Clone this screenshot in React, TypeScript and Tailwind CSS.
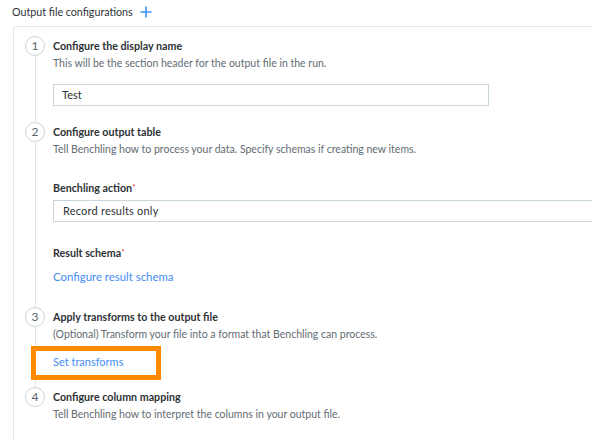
import React from "react";

interface StepProps {
  n: number;
  title: string;
  desc: string;
  last?: boolean;
  children?: React.ReactNode;
}

const Step: React.FC<StepProps> = ({ n, title, desc, last, children }) => {
  return (
    <div className="flex">
      {/* number + connector */}
      <div className="flex flex-col items-center w-[20px] shrink-0">
        <div className="w-[20px] h-[20px] rounded-full border border-[#c9d5da] flex items-center justify-center text-[12px] text-[#58656d] leading-none">
          {n}
        </div>
        {!last && <div className="flex-1 w-px bg-[#dde4e7]" />}
      </div>
      <div className="pl-[8px] flex-1 min-w-0">
        <div className="h-[20px] flex items-center text-[10.7px] font-bold text-[#2d3236]">
          {title}
        </div>
        <div className="text-[10.5px] leading-[15px] text-[#626c73] whitespace-nowrap">
          {desc}
        </div>
        {children}
      </div>
    </div>
  );
};

export default function App() {
  return (
    <div className="w-[592px] h-[440px] overflow-hidden bg-white font-['Lato',sans-serif] pl-[12px]">
      {/* header */}
      <div className="h-[24px] flex items-center gap-[7px] text-[10.7px] text-[#2d3236]">
        <span>Output file configurations</span>
        <svg width="12" height="12" viewBox="0 0 12 12" className="text-[#3f8ef5]">
          <path d="M6 0.5v11M0.5 6h11" stroke="currentColor" strokeWidth="1.6" />
        </svg>
      </div>

      {/* card */}
      <div className="ml-[1px] mt-[2px] h-[440px] border-t border-l border-[#e3e8ea] rounded-tl-[4px] pl-[11px] pt-[9px]">
        <Step
          n={1}
          title="Configure the display name"
          desc="This will be the section header for the output file in the run."
        >
          <div className="mt-[13px] mb-[16px] w-[436px] h-[22px] border border-[#c8d5da] flex items-center pl-[8px] text-[11px] text-[#2d3236]">
            Test
          </div>
        </Step>

        <Step
          n={2}
          title="Configure output table"
          desc="Tell Benchling how to process your data. Specify schemas if creating new items."
        >
          <div className="mt-[23px] h-[16px] flex items-center text-[10.7px] font-bold text-[#2d3236]">
            Benchling action<span className="text-[#e8505b] text-[8px] self-start mt-[1px]">*</span>
          </div>
          <div className="mt-[4px] h-[22px] w-[600px] border border-[#c8d5da] flex items-center pl-[9px] text-[11px] text-[#2d3236] tracking-[0.2px]">
            Record results only
          </div>
          <div className="mt-[23px] h-[16px] flex items-center text-[10.7px] font-bold text-[#2d3236]">
            Result schema<span className="text-[#e8505b] text-[8px] self-start mt-[1px]">*</span>
          </div>
          <div className="mt-[8px] mb-[22px] h-[16px] flex items-center text-[11.4px] text-[#3f8ef5]">
            Configure result schema
          </div>
        </Step>

        <Step
          n={3}
          title="Apply transforms to the output file"
          desc="(Optional) Transform your file into a format that Benchling can process."
        >
          <div className="relative mt-[12px] mb-[17px] h-[16px] flex items-center text-[11px] text-[#3f8ef5]">
            Set transforms
            <div className="absolute left-[-22px] top-[-8px] w-[130px] h-[34px] border-[5px] border-[#ff8a00]" />
          </div>
        </Step>

        <Step
          n={4}
          last
          title="Configure column mapping"
          desc="Tell Benchling how to interpret the columns in your output file."
        />
      </div>
    </div>
  );
}
